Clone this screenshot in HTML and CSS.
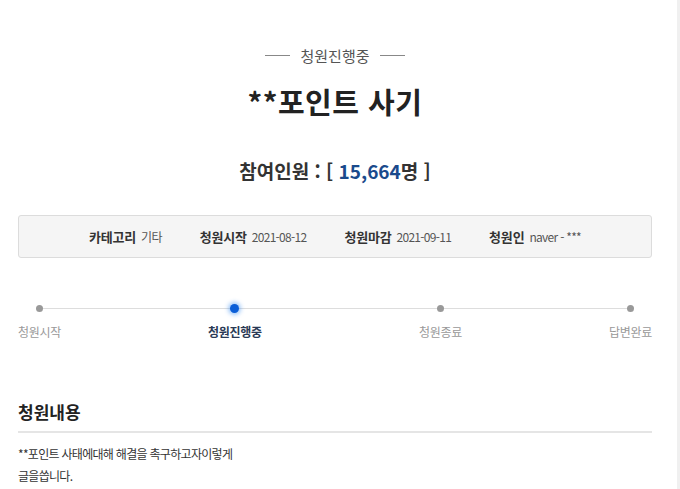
FILE: index.html
```html
<!DOCTYPE html>
<html lang="ko">
<head>
<meta charset="utf-8">
<link rel="stylesheet" href="styles.css">
</head>
<body>
<div class="page">
  <main class="content">
    <div class="status"><span class="status-line"></span><span class="status-text">청원진행중</span><span class="status-line"></span></div>
    <h1 class="title">**포인트 사기</h1>
    <p class="count">참여인원 : [ <span class="num">15,664</span>명 ]</p>
    <ul class="info">
      <li><strong>카테고리</strong><span class="val">기타</span></li>
      <li><strong>청원시작</strong><span class="val">2021-08-12</span></li>
      <li><strong>청원마감</strong><span class="val">2021-09-11</span></li>
      <li><strong>청원인</strong><span class="val">naver - ***</span></li>
    </ul>
    <ol class="steps">
      <li class="step"><span class="dot"></span><span class="label">청원시작</span></li>
      <li class="step active"><span class="dot"></span><span class="label">청원진행중</span></li>
      <li class="step"><span class="dot"></span><span class="label">청원종료</span></li>
      <li class="step"><span class="dot"></span><span class="label">답변완료</span></li>
    </ol>
    <h2 class="section">청원내용</h2>
    <div class="body-text">
      <p>**포인트 사태에대해 해결을 촉구하고자이렇게</p>
      <p>글을씁니다.</p>
    </div>
  </main>
  <div class="edge"></div>
</div>
</body>
</html>
```
FILE: styles.css
```css
* { box-sizing: border-box; }
html, body { margin: 0; padding: 0; background: #fff; }
body {
  font-family: "Noto Sans CJK KR", "Noto Sans", sans-serif;
  color: #333;
  height: 489px;
  overflow: hidden;
}
.page { display: flex; height: 489px; }
.content { width: 634px; margin-left: 18px; flex: none; }
.edge { margin-left: auto; width: 3px; background: #f0f0f0; }

.status {
  display: flex; justify-content: center; align-items: center;
  gap: 10px; margin-top: 43px; height: 24px;
}
.status-line { width: 25px; height: 1px; background: #888; }
.status-text { font-size: 15px; color: #555; }

.title {
  margin: 12px 0 0; text-align: center;
  font-size: 29px; font-weight: 700; color: #222; line-height: 44px;
  letter-spacing: 0.5px;
}
.count {
  margin: 34px 0 0; text-align: center;
  font-size: 19px; font-weight: 700; color: #333; line-height: 28px;
}
.count .num { color: #1a4a8c; }

.info {
  list-style: none; margin: 30px 0 0; padding: 0;
  height: 43px;
  display: flex; justify-content: center; align-items: center; gap: 38px;
  background: #f5f5f5; border: 1px solid #dcdcdc; border-radius: 3px;
}
.info li { display: flex; align-items: center; gap: 5px; }
.info strong { color: #333; font-weight: 700; font-size: 13px; letter-spacing: -0.2px; }
.info .val { font-size: 12px; color: #555; letter-spacing: -0.7px; }

.steps {
  list-style: none; margin: 42px 0 0; padding: 0;
  display: flex; justify-content: space-between; position: relative;
}
.steps::before {
  content: ""; position: absolute; left: 21px; right: 21px; top: 8px;
  height: 1px; background: #ddd;
}
.step { display: flex; flex-direction: column; align-items: center; position: relative; }
.dot {
  width: 7px; height: 7px; border-radius: 50%; background: #999;
  margin-top: 5px; margin-bottom: 4px;
}
.label { margin-top: 6px; font-size: 12px; color: #999; line-height: 20px; letter-spacing: -0.3px; }
.step.active .dot {
  width: 9px; height: 9px; margin-top: 4px; margin-bottom: 3px;
  background: #0b5ed7; box-shadow: 0 0 4px 2px rgba(40,130,240,0.45);
}
.step.active { margin-right: 10px; }
.step.active .label { color: #2a3a55; font-weight: 700; }

.section {
  margin: 57px 0 0; padding-bottom: 6px;
  font-size: 17px; font-weight: 700; color: #222; line-height: 26px;
  border-bottom: 2px solid #e5e5e5;
}
.body-text { margin-top: 10px; font-size: 12px; color: #333; letter-spacing: -0.7px; }
.body-text p { margin: 0; line-height: 22px; }
```
